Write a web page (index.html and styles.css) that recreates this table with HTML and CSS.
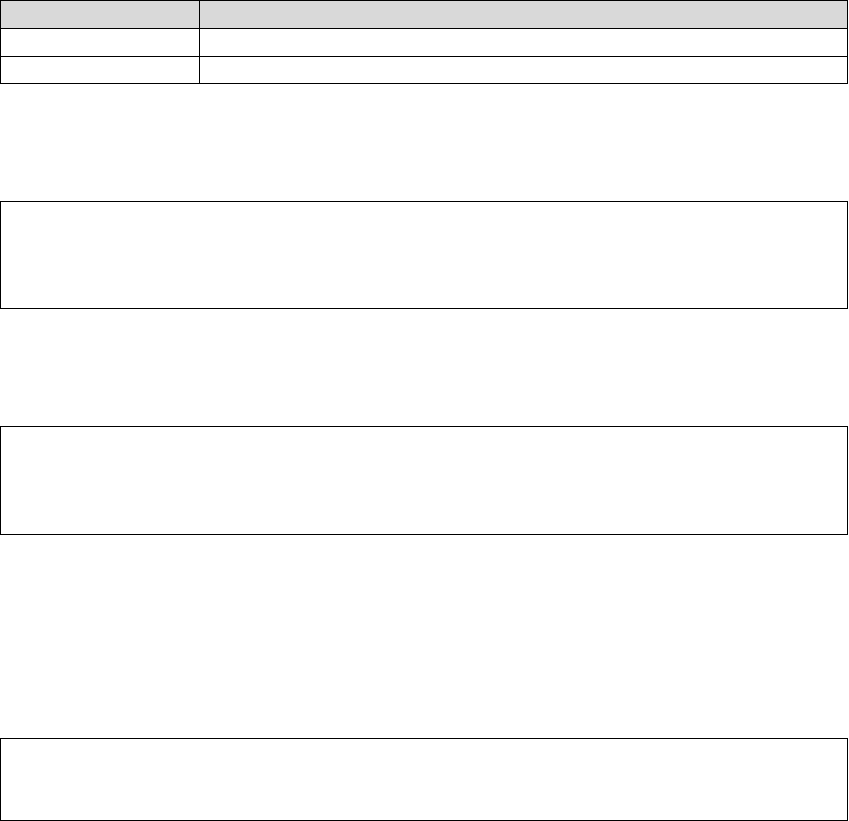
FILE: index.html
```html
<!DOCTYPE html>
<html>
<head>
<meta charset="utf-8">
<link rel="stylesheet" href="styles.css">
</head>
<body>
<div class="page">
  <table class="grid">
    <tr class="head"><th class="c1"></th><th></th></tr>
    <tr class="row"><td class="c1"></td><td></td></tr>
    <tr class="row last"><td class="c1"></td><td></td></tr>
  </table>
  <div class="box box1"></div>
  <div class="box box2"></div>
  <div class="box box3"></div>
</div>
</body>
</html>
```
FILE: styles.css
```css
html, body { margin: 0; padding: 0; background: #fff; }
body { font-family: "Liberation Sans", Arial, sans-serif; }
.page { display: flex; flex-direction: column; width: 848px; }
.grid { border-collapse: collapse; width: 848px; table-layout: fixed; }
.grid th, .grid td { border: 1px solid #000; padding: 0; }
.grid .c1 { width: 198px; }
.head th { background: #d9d9d9; height: 27px; }
.row td { height: 27px; }
.row.last td { height: 26px; }
.box { border: 1px solid #000; box-sizing: border-box; width: 848px; }
.box1 { margin-top: 117px; height: 108px; }
.box2 { margin-top: 117px; height: 109px; }
.box3 { margin-top: 203px; height: 83px; }
```
